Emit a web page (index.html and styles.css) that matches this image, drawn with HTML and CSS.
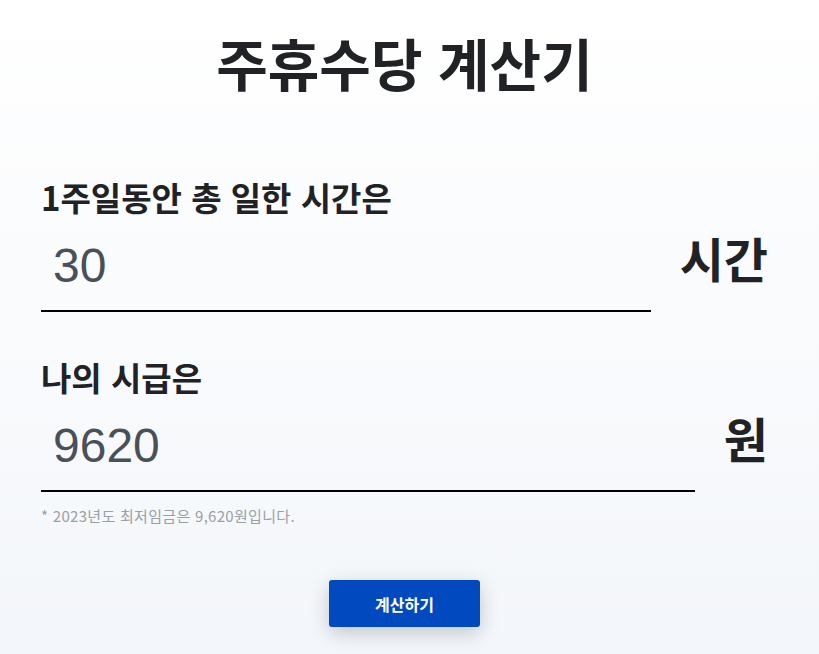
FILE: index.html
```html
<!DOCTYPE html>
<html lang="ko">
<head>
    <title>주휴수당 계산기</title>
    <meta charset="utf-8">
    <link rel="stylesheet" href="styles.css">
</head>
<body>
    <div class="container">
        <h1 class="title">주휴수당 계산기</h1>

        <form id="calcForm" class="calc-form">
            <div class="field">
                <label class="field-label" for="hours">1주일동안 총 일한 시간은</label>
                <div class="field-row">
                    <input type="text" id="hours" class="field-input" value="30">
                    <span class="field-unit">시간</span>
                </div>
            </div>

            <div class="field">
                <label class="field-label" for="wage">나의 시급은</label>
                <div class="field-row">
                    <input type="text" id="wage" class="field-input" value="9620">
                    <span class="field-unit">원</span>
                </div>
                <p class="note">* 2023년도 최저임금은 9,620원입니다.</p>
            </div>

            <div class="actions">
                <button type="submit" class="submit-btn">계산하기</button>
            </div>
        </form>
    </div>
</body>
</html>
```

FILE: styles.css
```css
html {
    min-height: 100%;
    background: linear-gradient(#ffffff, #f3f6fa);
}
body {
    margin: 0;
    font-family: "Noto Sans CJK KR", "Noto Sans", sans-serif;
    color: #212226;
}
.container {
    padding: 22px 51px 27px 41px;
}
.title {
    margin: 0;
    text-align: center;
    font-size: 56px;
    font-weight: 700;
    line-height: 80px;
}
.calc-form {
    margin-top: 73px;
}
.field {
    margin-bottom: 43px;
}
.field-label {
    display: block;
    font-size: 33px;
    font-weight: 700;
    line-height: 44px;
}
.field-row {
    display: flex;
    align-items: flex-start;
    gap: 29px;
}
.field-input {
    flex: 1;
    min-width: 0;
    border: none;
    border-bottom: 2px solid #000;
    background: transparent;
    padding: 19px 12px 17px;
    font-family: "Liberation Sans", Arial, sans-serif;
    font-size: 48px;
    color: #495057;
    outline: none;
}
.field-unit {
    margin-top: 13px;
    font-size: 48px;
    font-weight: 700;
    line-height: 50px;
}
.note {
    margin: 13px 0 0;
    font-size: 15px;
    letter-spacing: 0.3px;
    color: #9aa0a6;
}
.actions {
    text-align: center;
    margin-top: 54px;
}
.submit-btn {
    width: 151px;
    height: 47px;
    border: none;
    border-radius: 3px;
    background-color: #0049bf;
    color: #fff;
    font-family: "Noto Sans CJK KR", sans-serif;
    font-size: 16px;
    font-weight: 700;
    box-shadow: 0 6px 20px rgba(0, 0, 0, 0.2);
    cursor: pointer;
}
```
